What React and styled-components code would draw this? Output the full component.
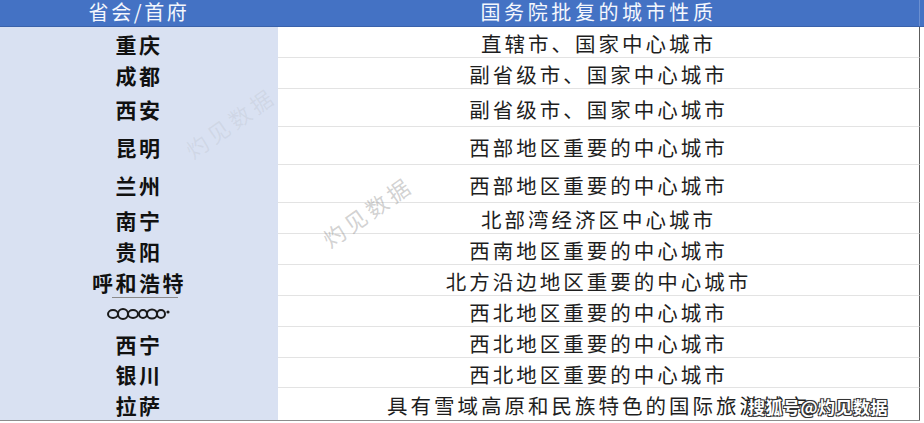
import React from "react";
import styled, { createGlobalStyle } from "styled-components";

const Global = createGlobalStyle`
  html, body { margin: 0; padding: 0; background: #ffffff; }
  body { font-family: "Noto Sans CJK SC", "Noto Sans", sans-serif; }
`;

const Sheet = styled.div`
  position: relative;
  width: 924px;
  height: 423px;
  overflow: hidden;
  background: #ffffff;
`;

const HeaderBar = styled.div`
  display: grid;
  grid-template-columns: 278px 642px 1fr;
  height: 27px;
  box-sizing: border-box;
  background: #4472c4;
  border-bottom: 1px solid #3a62ab;
`;

const HeaderCell = styled.div`
  display: flex;
  align-items: center;
  justify-content: center;
  color: #f4f7fd;
  font-size: 20px;
  letter-spacing: ${(p) => p.$spacing || 3.6}px;
  line-height: 24px;
  padding-bottom: 2px;
  box-sizing: border-box;
  border-right: ${(p) => (p.$edge ? "1px solid #6b8fd0" : "none")};
`;

const Body = styled.div`
  width: 920px;
  border-bottom: 1px solid #8c8c8c;
`;

const Row = styled.div`
  display: grid;
  grid-template-columns: 278px 642px;
  height: ${(p) => p.$h}px;
`;

const CityCell = styled.div`
  display: flex;
  flex-direction: column;
  align-items: center;
  justify-content: center;
  background: #d9e1f2;
  color: #111111;
  font-size: 21px;
  font-weight: 700;
  letter-spacing: 2.5px;
  line-height: 1;
  padding-top: 3px;
  box-sizing: border-box;
`;

const DescCell = styled.div`
  display: flex;
  align-items: center;
  justify-content: center;
  color: #1e1e1e;
  font-size: 20.5px;
  letter-spacing: 3px;
  line-height: 1;
  padding-top: 3px;
  box-sizing: border-box;
  border-right: 1px solid #5c5c5c;
  border-bottom: ${(p) => (p.$last ? "none" : "1px solid #e3e3e3")};
  white-space: nowrap;
`;

const Underlined = styled.span`
  display: inline-block;
  position: relative;
  &::after {
    content: "";
    position: absolute;
    left: 20px;
    right: 8px;
    bottom: -5px;
    height: 1px;
    background: #8a8a8a;
  }
`;

const Mark = styled.div`
  position: absolute;
  left: ${(p) => p.$x}px;
  top: ${(p) => p.$y}px;
  transform: rotate(-35deg);
  transform-origin: center;
  font-size: 22px;
  letter-spacing: 4px;
  color: rgba(140, 140, 140, ${(p) => p.$a});
  white-space: nowrap;
  pointer-events: none;
`;

const Brand = styled.div`
  position: absolute;
  left: 748px;
  top: 394px;
  font-size: 17px;
  font-weight: 700;
  letter-spacing: 0.5px;
  color: #ffffff;
  white-space: nowrap;
  text-shadow: -1px -1px 0 #333, 1px -1px 0 #333, -1px 1px 0 #333, 1px 1px 0 #333,
    0 0 2px rgba(0, 0, 0, 0.6);
`;

const Scribble = () => (
  <svg width="64" height="14" viewBox="0 0 64 14" style={{ marginTop: 2 }}>
    <g fill="none" stroke="#1a1a1a" strokeWidth="2">
      <ellipse cx="6" cy="7" rx="5" ry="4" />
      <ellipse cx="16" cy="7" rx="5" ry="5" />
      <ellipse cx="26" cy="7" rx="5" ry="4" />
      <ellipse cx="36" cy="7" rx="4" ry="4" />
      <ellipse cx="45" cy="7" rx="5" ry="4.5" />
      <ellipse cx="54" cy="7" rx="4" ry="4" />
    </g>
    <circle cx="61" cy="5" r="1.6" fill="#1a1a1a" />
  </svg>
);

const rows = [
  { city: "重庆", desc: "直辖市、国家中心城市", h: 31 },
  { city: "成都", desc: "副省级市、国家中心城市", h: 31 },
  { city: "西安", desc: "副省级市、国家中心城市", h: 38 },
  { city: "昆明", desc: "西部地区重要的中心城市", h: 38 },
  { city: "兰州", desc: "西部地区重要的中心城市", h: 38 },
  { city: "南宁", desc: "北部湾经济区中心城市", h: 31 },
  { city: "贵阳", desc: "西南地区重要的中心城市", h: 31 },
  { city: "呼和浩特", desc: "北方沿边地区重要的中心城市", h: 31, underline: true },
  { city: null, desc: "西北地区重要的中心城市", h: 31 },
  { city: "西宁", desc: "西北地区重要的中心城市", h: 31 },
  { city: "银川", desc: "西北地区重要的中心城市", h: 30 },
  { city: "拉萨", desc: "具有雪域高原和民族特色的国际旅游城市", h: 32 },
];

export default function App() {
  return (
    <Sheet>
      <Global />
      <HeaderBar>
        <HeaderCell $spacing={2.6}>省会/首府</HeaderCell>
        <HeaderCell $edge>国务院批复的城市性质</HeaderCell>
        <div />
      </HeaderBar>
      <Body>
        {rows.map((r, i) => (
          <Row key={i} $h={r.h}>
            <CityCell>
              {r.city === null ? (
                <Scribble />
              ) : r.underline ? (
                <Underlined>{r.city}</Underlined>
              ) : (
                r.city
              )}
            </CityCell>
            <DescCell $last={i === rows.length - 1}>{r.desc}</DescCell>
          </Row>
        ))}
      </Body>
      <Mark $x={315} $y={195} $a={0.4}>灼见数据</Mark>
      <Mark $x={178} $y={106} $a={0.12}>灼见数据</Mark>
      <Brand>搜狐号@灼见数据</Brand>
    </Sheet>
  );
}
